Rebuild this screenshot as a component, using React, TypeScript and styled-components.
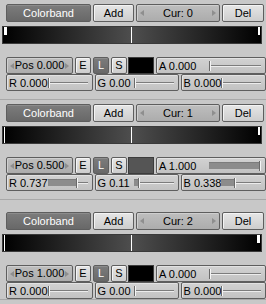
import React from 'react';
import styled, { createGlobalStyle, css } from 'styled-components';

const GlobalStyle = createGlobalStyle`
  html, body {
    margin: 0;
    padding: 0;
    background: #c8c8c8;
  }
  body {
    font-family: "Liberation Sans", Arial, sans-serif;
    font-size: 11px;
    color: #000;
  }
`;

type Kind = 'push' | 'on' | 'num';

const Page = styled.div`
  width: 266px;
  height: 304px;
  background: #c8c8c8;
  overflow: hidden;
`;

const Panel = styled.div<{ top: number }>`
  display: flex;
  flex-direction: column;
  padding: ${(p) => p.top}px 4px 0 2px;
  height: 100px;
  box-sizing: border-box;
  border-bottom: 1px solid #a8a8a8;
`;

const Row = styled.div<{ mt?: number }>`
  display: flex;
  gap: 2px;
  padding-left: 4px;
  margin-top: ${(p) => p.mt ?? 0}px;
`;

const Btn = styled.div<{ kind: Kind; w: number; h?: number }>`
  flex: 0 0 ${(p) => p.w}px;
  height: ${(p) => p.h ?? 18}px;
  box-sizing: border-box;
  display: flex;
  align-items: center;
  justify-content: center;
  border: 1px solid #5e5e5e;
  border-radius: 2px;
  line-height: 1;
  ${(p) =>
    p.kind === 'push' &&
    css`
      background: linear-gradient(#e6e6e6, #cdcdcd);
      box-shadow: inset 1px 1px 0 #f4f4f4;
    `}
  ${(p) =>
    p.kind === 'on' &&
    css`
      background: linear-gradient(#7c7c7c, #686868);
      color: #fff;
      box-shadow: inset 0 1px 0 #8c8c8c;
    `}
  ${(p) =>
    p.kind === 'num' &&
    css`
      background: linear-gradient(#bebebe, #acacac);
      box-shadow: inset 1px 1px 0 #cfcfcf;
      justify-content: space-between;
      padding: 0 3px;
    `}
`;

const Arrow = styled.span<{ dir: 'l' | 'r' }>`
  width: 0;
  height: 0;
  border-top: 3px solid transparent;
  border-bottom: 3px solid transparent;
  ${(p) =>
    p.dir === 'l'
      ? css`border-right: 4px solid #8e8e8e;`
      : css`border-left: 4px solid #8e8e8e;`}
`;

const Band = styled.div`
  position: relative;
  margin-top: 4px;
  height: 18px;
  box-sizing: border-box;
  border: 1px solid #3a3a3a;
  background: linear-gradient(90deg, #000 0%, #4e4e4e 50%, #000 100%);
`;

// stop markers drawn over the band
const Marker = styled.div<{ short: boolean; thick: boolean }>`
  position: absolute;
  top: 0;
  background: #fff;
  width: ${(p) => (p.thick ? 3 : p.short ? 2 : 1)}px;
  height: ${(p) => (p.short ? '8px' : '100%')};
`;

const Swatch = styled.div<{ color: string }>`
  flex: 0 0 26px;
  height: 17px;
  box-sizing: border-box;
  border: 1px solid #3c3c3c;
  background: ${(p) => p.color};
`;

const SliderBox = styled.div<{ w: number }>`
  flex: 0 0 ${(p) => p.w}px;
  height: 17px;
  box-sizing: border-box;
  display: flex;
  align-items: center;
  border: 1px solid #5e5e5e;
  border-radius: 2px;
  background: linear-gradient(#d2d2d2, #c2c2c2);
  box-shadow: inset 1px 1px 0 #e2e2e2;
  padding: 0 4px 0 2px;
`;

const SliderLabel = styled.span`
  flex: 1 1 auto;
  white-space: nowrap;
`;

const Track = styled.div<{ w: number }>`
  flex: 0 0 ${(p) => p.w}px;
  display: flex;
  align-items: center;
  height: 10px;
`;

const Fill = styled.div`
  height: 7px;
  background: #8c8c8c;
  box-shadow: inset 0 1px 0 #7c7c7c;
`;

const Handle = styled.div`
  width: 1px;
  height: 10px;
  background: #6a6a6a;
  border-right: 1px solid #f4f4f4;
`;

const Line = styled.div`
  flex: 1 1 auto;
  height: 1px;
  background: #7c7c7c;
  border-bottom: 1px solid #ececec;
`;

const Slider: React.FC<{ label: string; value: number; w: number; track: number }> = ({
  label,
  value,
  w,
  track,
}) => (
  <SliderBox w={w}>
    <SliderLabel>{label}</SliderLabel>
    <Track w={track}>
      <Fill style={{ width: Math.round(value * (track - 2)) }} />
      <Handle />
      <Line />
    </Track>
  </SliderBox>
);

interface Stop {
  pos: string;
  r: number;
  g: number;
  b: number;
  a: number;
  rs: string;
  gs: string;
  bs: string;
  as: string;
  swatch: string;
}

const stops: Stop[] = [
  { pos: '0.000', r: 0, g: 0, b: 0, a: 0, rs: '0.000', gs: '0.00', bs: '0.000', as: '0.000', swatch: '#000' },
  { pos: '0.500', r: 0.737, g: 0.11, b: 0.338, a: 1, rs: '0.737', gs: '0.11', bs: '0.338', as: '1.000', swatch: '#555555' },
  { pos: '1.000', r: 0, g: 0, b: 0, a: 0, rs: '0.000', gs: '0.00', bs: '0.000', as: '0.000', swatch: '#000' },
];

// left offset of each stop marker inside the band
const markerLeft = [1, 128, 255];

const ColorbandPanel: React.FC<{ cur: number; top: number }> = ({ cur, top }) => {
  const s = stops[cur];
  return (
    <Panel top={top}>
      <Row>
        <Btn kind="on" w={85}>Colorband</Btn>
        <Btn kind="push" w={41}>Add</Btn>
        <Btn kind="num" w={84}>
          <Arrow dir="l" />
          <span>Cur: {cur}</span>
          <Arrow dir="r" />
        </Btn>
        <Btn kind="push" w={42}>Del</Btn>
      </Row>
      <Band>
        {markerLeft.map((x, i) => {
          const short = i === 2 || (i === 0 && cur === 0);
          const thick = i === cur && i !== 1;
          return (
            <Marker
              key={i}
              short={short}
              thick={thick}
              style={{ left: thick && i === 2 ? x - 1 : x }}
            />
          );
        })}
      </Band>
      <Row mt={13}>
        <Btn kind="num" w={67} h={17}>
          <Arrow dir="l" />
          <span>Pos {s.pos}</span>
          <Arrow dir="r" />
        </Btn>
        <Btn kind="push" w={16} h={17}>E</Btn>
        <Btn kind="on" w={16} h={17}>L</Btn>
        <Btn kind="push" w={16} h={17}>S</Btn>
        <Swatch color={s.swatch} style={{ marginLeft: -1 }} />
        <Slider label={`A ${s.as}`} value={s.a} w={110} track={52} />
      </Row>
      <Row>
        <Slider label={`R ${s.rs}`} value={s.r} w={85} track={40} />
        <Slider label={`G ${s.gs}`} value={s.g} w={84} track={40} />
        <Slider label={`B ${s.bs}`} value={s.b} w={85} track={40} />
      </Row>
    </Panel>
  );
};

export default function App() {
  return (
    <Page>
      <GlobalStyle />
      <ColorbandPanel cur={0} top={4} />
      <ColorbandPanel cur={1} top={4} />
      <ColorbandPanel cur={2} top={12} />
    </Page>
  );
}
